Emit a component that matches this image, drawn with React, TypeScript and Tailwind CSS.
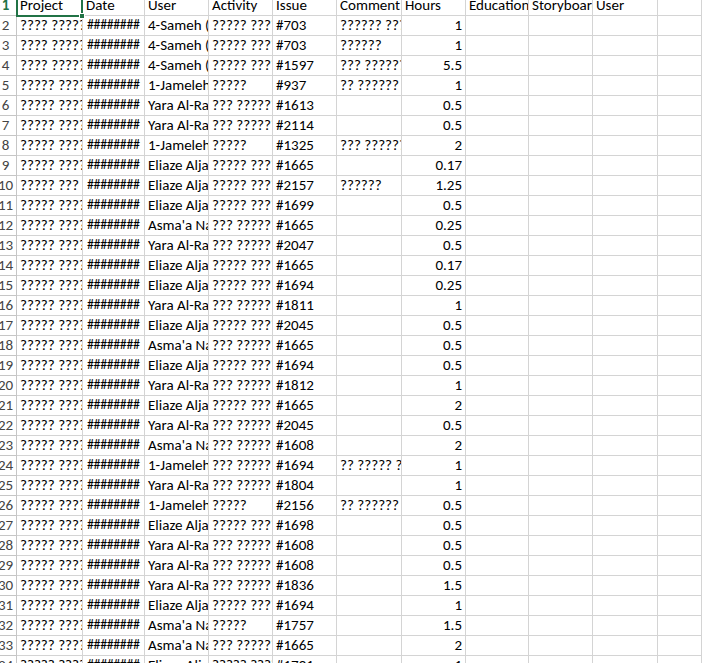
import React from "react";

type Row = [string, string, string, string, string, string, string, string];

const A2 = "???? ?????";
const A5 = "????? ????";
const B = "########";
const D1 = "????? ????";
const D2 = "??? ??????";
const D3 = "?????";
const SA = "4-Sameh (";
const JA = "1-Jameleh";
const YA = "Yara Al-Ra";
const EL = "Eliaze Alja";
const AS = "Asma'a Na";

const rows: Row[] = [
  ["2", A2, B, SA, D1, "#703", "?????? ???", "1"],
  ["3", A2, B, SA, D1, "#703", "??????", "1"],
  ["4", A2, B, SA, D1, "#1597", "??? ??????", "5.5"],
  ["5", A5, B, JA, D3, "#937", "?? ??????", "1"],
  ["6", A5, B, YA, D2, "#1613", "", "0.5"],
  ["7", A5, B, YA, D2, "#2114", "", "0.5"],
  ["8", A5, B, JA, D3, "#1325", "??? ??????", "2"],
  ["9", A5, B, EL, D1, "#1665", "", "0.17"],
  ["10", "????? ???", B, EL, D1, "#2157", "??????", "1.25"],
  ["11", A5, B, EL, D1, "#1699", "", "0.5"],
  ["12", A5, B, AS, D2, "#1665", "", "0.25"],
  ["13", A5, B, YA, D2, "#2047", "", "0.5"],
  ["14", A5, B, EL, D1, "#1665", "", "0.17"],
  ["15", A5, B, EL, D1, "#1694", "", "0.25"],
  ["16", A5, B, YA, D2, "#1811", "", "1"],
  ["17", A5, B, EL, D1, "#2045", "", "0.5"],
  ["18", A5, B, AS, D2, "#1665", "", "0.5"],
  ["19", A5, B, EL, D1, "#1694", "", "0.5"],
  ["20", A5, B, YA, D2, "#1812", "", "1"],
  ["21", A5, B, EL, D1, "#1665", "", "2"],
  ["22", A5, B, YA, D2, "#2045", "", "0.5"],
  ["23", A5, B, AS, D2, "#1608", "", "2"],
  ["24", A5, B, JA, D2, "#1694", "?? ????? ?", "1"],
  ["25", A5, B, YA, D2, "#1804", "", "1"],
  ["26", A5, B, JA, D3, "#2156", "?? ??????", "0.5"],
  ["27", A5, B, EL, D1, "#1698", "", "0.5"],
  ["28", A5, B, YA, D2, "#1608", "", "0.5"],
  ["29", A5, B, YA, D2, "#1608", "", "0.5"],
  ["30", A5, B, YA, D2, "#1836", "", "1.5"],
  ["31", A5, B, EL, D1, "#1694", "", "1"],
  ["32", A5, B, AS, D3, "#1757", "", "1.5"],
  ["33", A5, B, AS, D2, "#1665", "", "2"],
  ["34", A5, B, EL, D1, "#1701", "", "1"],
];

const header = ["Project", "Date", "User", "Activity", "Issue", "Comment", "Hours", "Education", "Storyboard", "User", ""];

const cell =
  "border-r border-b border-[#d4d4d4] overflow-hidden whitespace-nowrap flex items-end pb-[2px] px-[3px] leading-[16px]";

function RowHeader({ n, first }: { n: string; first?: boolean }) {
  return (
    <div
      className={
        "border-r border-b border-[#c6c6c6] flex items-end pb-[2px] leading-[16px] " +
        (first ? "text-[#217346] font-bold" : "text-[#444444]")
      }
    >
      <div className="w-[11px] flex justify-center">{n}</div>
    </div>
  );
}

export default function App() {
  return (
    <div
      className="w-[702px] h-[663px] overflow-hidden bg-white text-black text-[15px] relative"
      style={{ fontFamily: "Carlito, Lato, 'Liberation Sans', sans-serif" }}
    >
      <div className="grid grid-cols-[17px_66px_62px_64px_64px_64px_65px_64px_63px_64px_65px_1fr] grid-rows-[16px] auto-rows-[20px]">
        <RowHeader n="1" first />
        {header.map((h, i) => (
          <div key={i} className={cell}>
            {h}
          </div>
        ))}
        {rows.map((r) => (
          <React.Fragment key={r[0]}>
            <RowHeader n={r[0]} />
            <div className={cell}>{r[1]}</div>
            <div className={cell + " pl-[4px] text-[14px] tracking-[-0.4px]"}>{r[2]}</div>
            <div className={cell}>{r[3]}</div>
            <div className={cell}>{r[4]}</div>
            <div className={cell}>{r[5]}</div>
            <div className={cell}>{r[6]}</div>
            <div className={cell + " justify-end"}>{r[7]}</div>
            <div className={cell}></div>
            <div className={cell}></div>
            <div className={cell}></div>
            <div className={cell}></div>
          </React.Fragment>
        ))}
      </div>
      <div className="absolute left-[16px] top-[-2px] w-[67px] h-[19px] border-2 border-[#217346] pointer-events-none" />
      <div className="absolute left-[79px] top-[13px] w-[6px] h-[6px] bg-[#217346] border border-white" />
    </div>
  );
}
